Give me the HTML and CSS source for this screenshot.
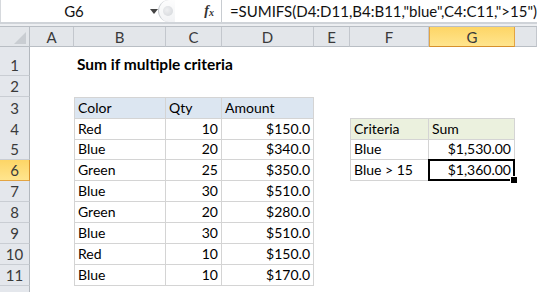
FILE: index.html
```html
<!DOCTYPE html>
<html>
<head>
<meta charset="utf-8">
<link rel="stylesheet" href="styles.css">
</head>
<body>
<div class="app">
  <div class="fbar">
    <div class="namebox"><span class="name">G6</span><svg class="caret" width="8" height="5" viewBox="0 0 8 5"><polygon points="0,0 8,0 4,5" fill="#444"/></svg></div>
    <div class="grip"><span class="knob"></span></div>
    <div class="fxbox"><span class="fx">f<sub>x</sub></span></div>
    <div class="formula">=SUMIFS(D4:D11,B4:B11,"blue",C4:C11,"&gt;15")</div>
  </div>
  <div class="gap"></div>
  <div class="sheet">
    <div class="row hdr">
      <div class="corner"><svg width="12" height="12" viewBox="0 0 12 12"><polygon points="12,0 12,12 0,12" fill="#c9cdd2"/></svg></div>
      <div class="ch">A</div><div class="ch">B</div><div class="ch">C</div><div class="ch">D</div><div class="ch">E</div><div class="ch">F</div><div class="ch sel">G</div><div class="ch"></div>
    </div>
    <div class="row r1">
      <div class="rh">1</div><div class="c"></div><div class="c title">Sum if multiple criteria</div><div class="c"></div><div class="c"></div><div class="c"></div><div class="c"></div><div class="c"></div><div class="c"></div>
    </div>
    <div class="row">
      <div class="rh">2</div><div class="c"></div><div class="c"></div><div class="c"></div><div class="c"></div><div class="c"></div><div class="c"></div><div class="c"></div><div class="c"></div>
    </div>
    <div class="row">
      <div class="rh">3</div><div class="c"></div><div class="c t th tl tt">Color</div><div class="c t th tt">Qty</div><div class="c t th tt">Amount</div><div class="c"></div><div class="c"></div><div class="c"></div><div class="c"></div>
    </div>
    <div class="row">
      <div class="rh">4</div><div class="c"></div><div class="c t tl">Red</div><div class="c t n">10</div><div class="c t n">$150.0</div><div class="c"></div><div class="c t th2 tl tt">Criteria</div><div class="c t th2 tt">Sum</div><div class="c"></div>
    </div>
    <div class="row">
      <div class="rh">5</div><div class="c"></div><div class="c t tl">Blue</div><div class="c t n">20</div><div class="c t n">$340.0</div><div class="c"></div><div class="c t tl">Blue</div><div class="c t n">$1,530.00</div><div class="c"></div>
    </div>
    <div class="row">
      <div class="rh sel">6</div><div class="c"></div><div class="c t tl">Green</div><div class="c t n">25</div><div class="c t n">$350.0</div><div class="c"></div><div class="c t tl">Blue &gt; 15</div><div class="c t n active">$1,360.00</div><div class="c"></div>
    </div>
    <div class="row">
      <div class="rh">7</div><div class="c"></div><div class="c t tl">Blue</div><div class="c t n">30</div><div class="c t n">$510.0</div><div class="c"></div><div class="c"></div><div class="c"></div><div class="c"></div>
    </div>
    <div class="row">
      <div class="rh">8</div><div class="c"></div><div class="c t tl">Green</div><div class="c t n">20</div><div class="c t n">$280.0</div><div class="c"></div><div class="c"></div><div class="c"></div><div class="c"></div>
    </div>
    <div class="row">
      <div class="rh">9</div><div class="c"></div><div class="c t tl">Blue</div><div class="c t n">30</div><div class="c t n">$510.0</div><div class="c"></div><div class="c"></div><div class="c"></div><div class="c"></div>
    </div>
    <div class="row">
      <div class="rh">10</div><div class="c"></div><div class="c t tl">Red</div><div class="c t n">10</div><div class="c t n">$150.0</div><div class="c"></div><div class="c"></div><div class="c"></div><div class="c"></div>
    </div>
    <div class="row">
      <div class="rh">11</div><div class="c"></div><div class="c t tl">Blue</div><div class="c t n">10</div><div class="c t n">$170.0</div><div class="c"></div><div class="c"></div><div class="c"></div><div class="c"></div>
    </div>
    <div class="row rlast">
      <div class="rh"></div><div class="c"></div><div class="c"></div><div class="c"></div><div class="c"></div><div class="c"></div><div class="c"></div><div class="c"></div><div class="c"></div>
    </div>
  </div>
</div>
</body>
</html>
```

FILE: styles.css
```css
* { box-sizing: border-box; }
html, body { margin: 0; padding: 0; background: #fff; }
body { width: 537px; height: 292px; overflow: hidden; font-family: Lato, "Open Sans", sans-serif; color: #000; }

.fbar { height: 22px; display: flex; background: #fff; }
.namebox { width: 161px; display: flex; align-items: center; border-left: 1px solid #d6d9dd; }
.name { width: 146px; text-align: center; font-size: 15px; color: #111; }
.caret { margin-left: 3px; }
.grip { width: 22px; border-left: 1px solid #c8ccd1; border-radius: 11px 0 0 11px; display: flex; align-items: center; padding-left: 4px; background: linear-gradient(#fdfdfd, #f2f3f5); }
.knob { width: 10px; height: 10px; border-radius: 50%; background: radial-gradient(circle at 40% 40%, #eeeff1, #d2d5d9); }
.fxbox { width: 62px; display: flex; align-items: center; justify-content: flex-end; padding-right: 7px; border-right: 1px solid #c8ccd1; }
.fx { font-family: "Liberation Serif", serif; font-style: italic; font-weight: bold; font-size: 14px; color: #333; }
.fx sub { font-size: 10px; vertical-align: -1px; }
.formula { flex: 1; font-size: 15px; padding-left: 8px; display: flex; align-items: center; white-space: nowrap; color: #111; }

.gap { height: 5px; border-top: 2px solid #cfd3d8; background: #eceef1; border-bottom: 1px solid #b9bec4; }

.sheet { display: flex; flex-direction: column; }
.row { display: grid; grid-template-columns: 30px 44px 92px 56px 92px 36px 79px 86px 1fr; height: 21px; }
.row.hdr { height: 20px; }
.row.r1 { height: 29px; }
.row.rlast { height: 6px; }

.corner { background: #e3e6ea; border-right: 1px solid #b9bec4; border-bottom: 1px solid #b9bec4; display: flex; align-items: flex-end; justify-content: flex-end; padding: 0 3px 2px 0; }
.ch { background: #e3e6ea; border-right: 1px solid #c3c7cd; border-bottom: 1px solid #b9bec4; display: flex; align-items: center; justify-content: center; font-size: 15px; color: #3a3a3a; padding-top: 1px; }
.ch.sel { background: linear-gradient(#fdd566, #ffe58e); border: 1px solid #e3a442; border-top: 0; border-bottom-color: #d7902c; }

.rh { background: #e4e7ec; border-right: 1px solid #b3b8be; border-bottom: 1px solid #c9cdd3; display: flex; align-items: flex-end; justify-content: center; font-size: 15px; color: #3a3a3a; line-height: 20px; }
.rlast .rh { border-bottom: 0; }
.rh.sel { background: linear-gradient(#fdd566, #ffe58e); border-right-color: #d7902c; border-bottom-color: #e3a442; }

.c { display: flex; align-items: flex-end; padding: 0 3px 1px 3px; font-size: 14px; white-space: nowrap; line-height: 19px; }
.title { font-weight: bold; font-size: 15.5px; overflow: visible; padding-bottom: 2px; }
.t { border-right: 1px solid #d4d4d4; border-bottom: 1px solid #d4d4d4; }
.tl { border-left: 1px solid #d4d4d4; }
.tt { border-top: 1px solid #d4d4d4; }
.th { background: #dce6f1; }
.th2 { background: #ebf1de; }
.n { justify-content: flex-end; }
.active { position: relative; }
.active::before { content: ""; position: absolute; left: -1px; top: -1px; right: -1px; bottom: -1px; border: 2px solid #000; pointer-events: none; }
.active::after { content: ""; position: absolute; right: -3px; bottom: -3px; width: 6px; height: 6px; background: #000; border-left: 1px solid #fff; border-top: 1px solid #fff; }
```
